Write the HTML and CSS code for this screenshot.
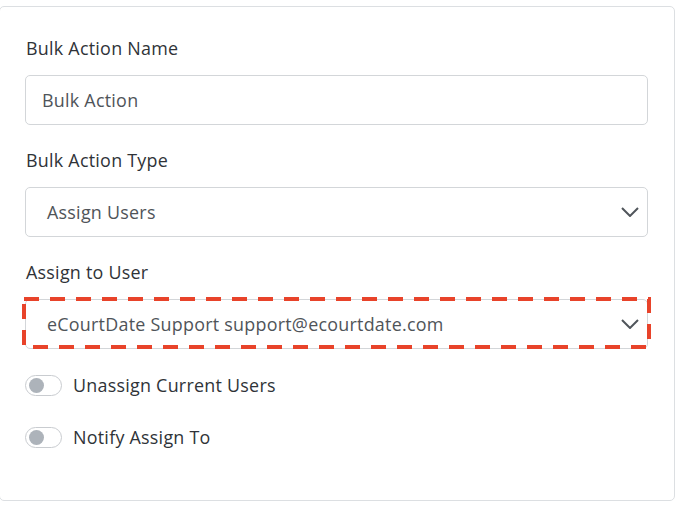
FILE: index.html
```html
<!DOCTYPE html>
<html lang="en">
<head>
<meta charset="utf-8">
<title>Bulk Action</title>
<link rel="stylesheet" href="styles.css">
</head>
<body>
<div class="page">
  <div class="card">
    <div class="field">
      <div class="label">Bulk Action Name</div>
      <div class="control">Bulk Action</div>
    </div>
    <div class="field">
      <div class="label">Bulk Action Type</div>
      <div class="control select">
        <span class="value">Assign Users</span>
        <svg class="chevron" width="18" height="10" viewBox="0 0 18 10"><path d="M1 1 L9 9 L17 1" fill="none" stroke="#50555b" stroke-width="2"/></svg>
      </div>
    </div>
    <div class="field">
      <div class="label">Assign to User</div>
      <div class="control select highlighted">
        <span class="value">eCourtDate Support support@ecourtdate.com</span>
        <svg class="chevron" width="18" height="10" viewBox="0 0 18 10"><path d="M1 1 L9 9 L17 1" fill="none" stroke="#50555b" stroke-width="2"/></svg>
        <svg class="dash-frame" width="629" height="52" viewBox="0 0 629 52"><rect x="2" y="2" width="625" height="48" fill="none" stroke="#e8432a" stroke-width="4" stroke-dasharray="15 11"/></svg>
      </div>
    </div>
    <div class="switches">
      <div class="switch-row"><span class="switch"><span class="knob"></span></span><span class="switch-label">Unassign Current Users</span></div>
      <div class="switch-row"><span class="switch"><span class="knob"></span></span><span class="switch-label">Notify Assign To</span></div>
    </div>
  </div>
</div>
</body>
</html>
```
FILE: styles.css
```css
* { box-sizing: border-box; }
html, body { margin: 0; padding: 0; background: #ffffff; }
body {
  font-family: "Open Sans", "Noto Sans", sans-serif;
  font-size: 17.9px;
  letter-spacing: 0.25px;
  color: #2f3338;
}
.page { padding-top: 6px; }
.card {
  margin-left: -1px;
  width: 676px;
  height: 495px;
  border: 1px solid #dcdfe2;
  border-radius: 5px;
  padding: 28px 26px 0 25px;
}
.field { margin-bottom: 22px; }
.label {
  height: 26px;
  line-height: 26px;
  margin-bottom: 14px;
  padding-left: 1px;
}
.control {
  height: 50px;
  border: 1px solid #d3d6d9;
  border-radius: 5px;
  padding: 0 16px;
  display: flex;
  align-items: center;
  color: #4f5459;
  position: relative;
}
.select { padding-left: 21px; padding-right: 8px; justify-content: space-between; }
.chevron { display: block; }
.dash-frame {
  position: absolute;
  top: -3px;
  left: -4px;
  pointer-events: none;
}
.switches { display: flex; flex-direction: column; gap: 31px; padding-top: 4px; }
.switch-row { display: flex; align-items: center; gap: 11px; height: 21px; }
.switch {
  width: 37px; height: 21px;
  border: 1px solid #c9ccd0;
  border-radius: 11px;
  display: flex; align-items: center;
  padding-left: 3px;
}
.knob { width: 15px; height: 15px; border-radius: 50%; background: #adb3ba; }
.switch-label { line-height: 21px; }
```
